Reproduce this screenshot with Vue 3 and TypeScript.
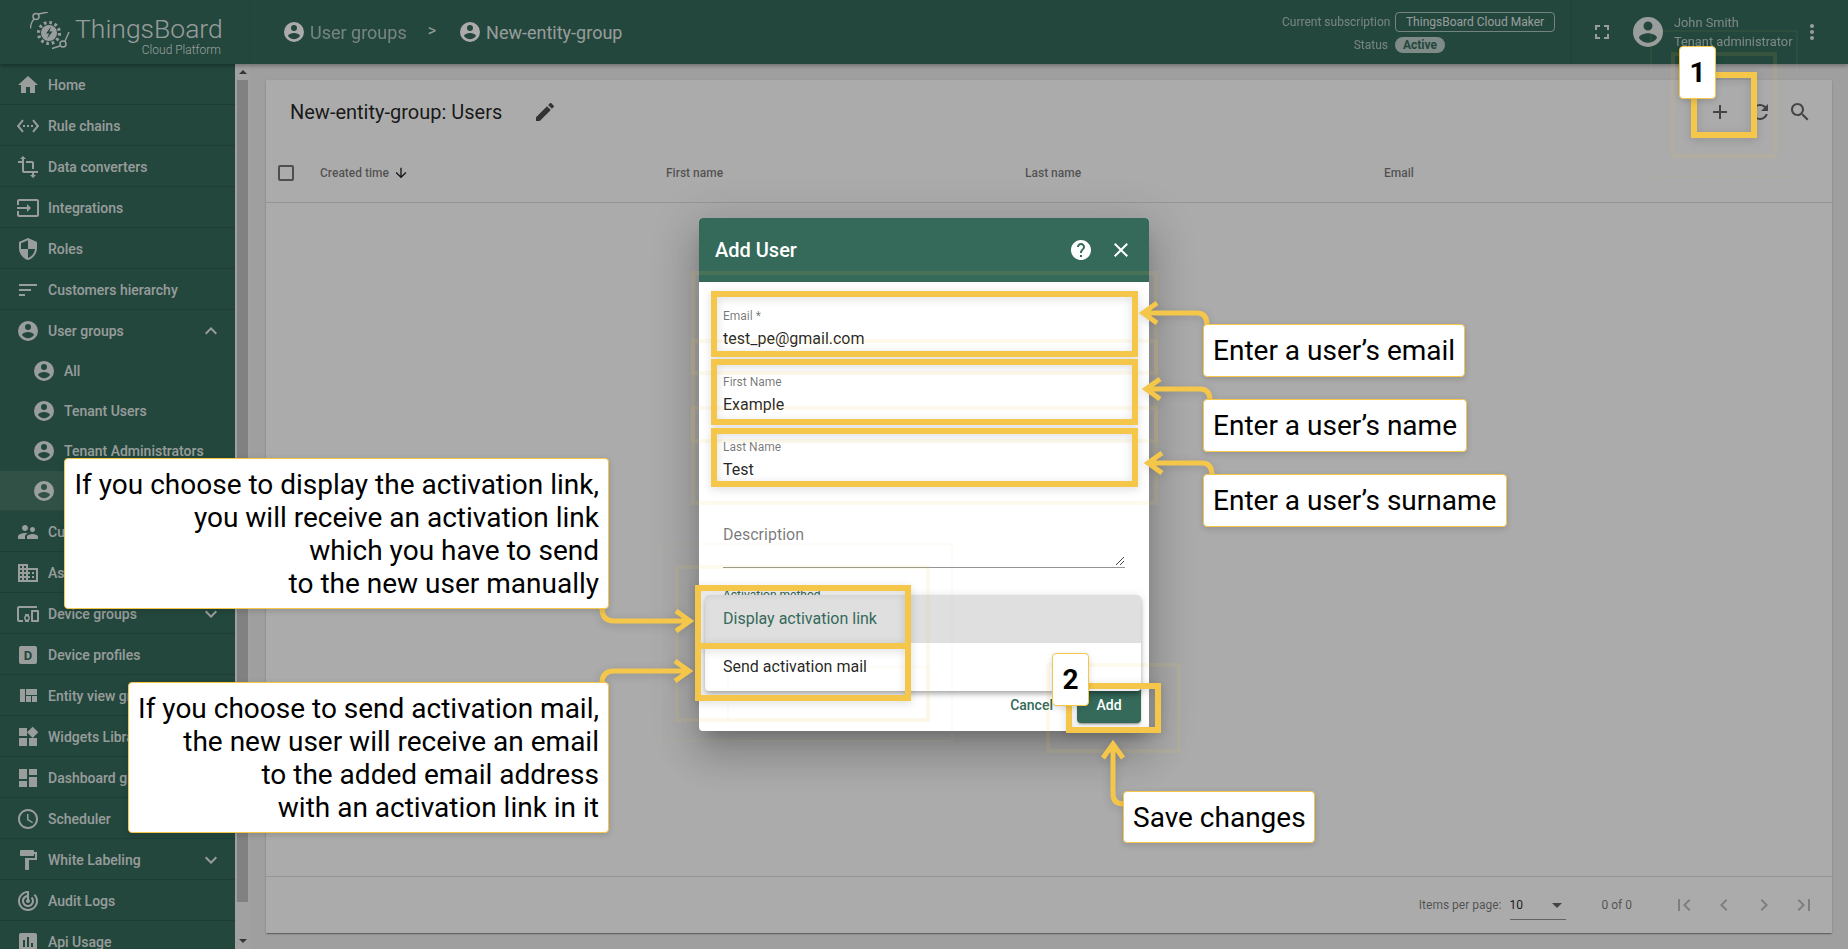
<template>
  <div class="page">
    <header class="topbar">
      <div class="brand">
        <svg class="logo" viewBox="0 0 41 41">
          <circle cx="19" cy="21" r="8" />
          <circle cx="19" cy="21" r="10.5" fill="none" stroke="currentColor" stroke-width="3.2" stroke-dasharray="2.6 2.9" />
          <path d="M21 14.5l-5 7h3l-2 5.500 5.500-7.500h-3z" fill="#356a5b" />
          <path d="M8.500 2L18 0M4 7C1.500 10 .5 13 .5 16.500M35 29l4-9M30 34l-8 2.500" fill="none" stroke="currentColor" stroke-width="1.4" />
          <circle cx="6" cy="4.500" r="3" fill="none" stroke="currentColor" stroke-width="1.5" />
          <circle cx="33" cy="32" r="3" fill="none" stroke="currentColor" stroke-width="1.5" />
        </svg>
        <div class="brand-text">
          <div class="brand-name">ThingsBoard</div>
          <div class="brand-sub">Cloud Platform</div>
        </div>
      </div>
      <div class="crumbs">
        <svg class="crumb-icon" viewBox="0 0 24 24"><path :d="icons.account" fill-rule="evenodd" /></svg>
        <span class="crumb-dim">User groups</span>
        <span class="crumb-sep">&gt;</span>
        <svg class="crumb-icon" viewBox="0 0 24 24"><path :d="icons.account" fill-rule="evenodd" /></svg>
        <span>New-entity-group</span>
      </div>
      <div class="plan">
        <div class="plan-row">
          <span class="plan-key">Current subscription</span>
          <span class="plan-name">ThingsBoard Cloud Maker</span>
        </div>
        <div class="plan-row">
          <span class="plan-key">Status</span>
          <span class="plan-status">Active</span>
        </div>
      </div>
      <div class="account">
        <svg class="full-icon" viewBox="0 0 24 24"><path :d="icons.fullscreen" /></svg>
        <svg class="avatar" viewBox="0 0 24 24"><path :d="icons.account" fill-rule="evenodd" /></svg>
        <div class="who">
          <div>John Smith</div>
          <div>Tenant administrator</div>
        </div>
        <svg class="more-icon" viewBox="0 0 24 24"><path :d="icons.more" /></svg>
      </div>
    </header>

    <div class="main">
      <aside class="sidebar">
        <nav class="menu">
          <div
            v-for="item in menu"
            :key="item.label"
            :class="['menu-item', { sub: item.sub, active: item.active, plain: item.plain }]"
          >
            <svg v-if="item.icon !== 'profile'" class="menu-icon" viewBox="0 0 24 24">
              <path :d="icons[item.icon]" fill-rule="evenodd" />
            </svg>
            <svg v-else class="menu-icon" viewBox="0 0 24 24">
              <rect x="3" y="3" width="18" height="18" rx="2" />
              <text x="12" y="17" text-anchor="middle" class="profile-letter">D</text>
            </svg>
            <span class="menu-label">{{ item.label }}</span>
            <svg v-if="item.chevron" class="menu-chevron" viewBox="0 0 24 24">
              <path :d="icons[item.chevron]" />
            </svg>
          </div>
        </nav>
        <div class="scrollbar">
          <span class="scroll-up"></span>
          <span class="scroll-thumb"></span>
          <span class="scroll-down"></span>
        </div>
      </aside>

      <main class="content">
        <section class="card">
          <div class="card-toolbar">
            <span class="card-title">New-entity-group: Users</span>
            <svg class="edit-icon" viewBox="0 0 24 24"><path :d="icons.edit" /></svg>
            <div class="tools">
              <svg viewBox="0 0 24 24"><path :d="icons.add" /></svg>
              <svg viewBox="0 0 24 24"><path :d="icons.refresh" /></svg>
              <svg viewBox="0 0 24 24"><path :d="icons.search" /></svg>
            </div>
          </div>
          <div class="table-head">
            <span class="check"></span>
            <span class="col sorted">
              Created time
              <svg viewBox="0 0 24 24"><path :d="icons.arrowDown" /></svg>
            </span>
            <span class="col">First name</span>
            <span class="col">Last name</span>
            <span class="col">Email</span>
          </div>
          <div class="table-body"></div>
          <div class="pager">
            <span class="pager-label">Items per page:</span>
            <span class="pager-select">10<i class="caret"></i></span>
            <span class="pager-range">0 of 0</span>
            <svg v-for="p in pagerIcons" :key="p" class="pager-btn" viewBox="0 0 24 24">
              <path :d="icons[p]" />
            </svg>
          </div>
        </section>
      </main>
    </div>

    <div class="backdrop">
      <div class="dialog">
        <div class="dialog-head">
          <span class="dialog-title">Add User</span>
          <svg viewBox="0 0 24 24"><path :d="icons.help" /></svg>
          <svg viewBox="0 0 24 24"><path :d="icons.close" /></svg>
        </div>
        <div class="dialog-body">
          <div v-for="f in fields" :key="f.label" class="field">
            <label>{{ f.label }}</label>
            <div class="value">{{ f.value }}</div>
          </div>
          <div class="textarea">
            <span>Description</span>
            <svg class="grip" viewBox="0 0 10 10">
              <path d="M1 9l8-8M5 9l4-4" stroke="#444" stroke-width="1" fill="none" />
            </svg>
          </div>
          <div class="select-label">Activation method</div>
        </div>
        <div class="dropdown">
          <div class="option selected">Display activation link</div>
          <div class="option">Send activation mail</div>
        </div>
        <div class="dialog-foot">
          <button class="btn-text">Cancel</button>
          <button class="btn-fill">Add</button>
        </div>
      </div>
    </div>

    <div class="annotations">
      <svg class="marks" viewBox="0 0 1848 949">
        <rect
          v-for="(g, i) in ghosts"
          :key="'g' + i"
          :x="g[0]"
          :y="g[1]"
          :width="g[2] - g[0]"
          :height="g[3] - g[1]"
          :stroke-width="g[4]"
          :stroke-opacity="g[5]"
          class="ghost"
        />
        <g class="solid">
          <rect
            v-for="(b, i) in boxes"
            :key="'b' + i"
            :x="b[0] + 3"
            :y="b[1] + 3"
            :width="b[2] - b[0] - 6"
            :height="b[3] - b[1] - 6"
          />
          <path v-for="(a, i) in arrows" :key="'a' + i" :d="a" />
        </g>
      </svg>
      <div v-for="c in callouts" :key="c.text" :class="['callout', c.cls]">
        <div v-for="line in c.text.split('\n')" :key="line">{{ line }}</div>
      </div>
      <div class="badge badge-one">1</div>
      <div class="badge badge-two">2</div>
    </div>
  </div>
</template>

<script setup lang="ts">
const icons: Record<string, string> = {
  home: 'M10 20v-6h4v6h5v-8h3L12 3 2 12h3v8z',
  account: 'M12 19.2c-2.5 0-4.71-1.28-6-3.2.03-2 4-3.1 6-3.1s5.97 1.1 6 3.1c-1.29 1.92-3.5 3.2-6 3.2M12 5a3 3 0 0 1 3 3 3 3 0 0 1-3 3 3 3 0 0 1-3-3 3 3 0 0 1 3-3m0-3A10 10 0 0 0 2 12a10 10 0 0 0 10 10 10 10 0 0 0 10-10A10 10 0 0 0 12 2z',
  ethernet: 'M7.77 6.76L6.23 5.48.82 12l5.41 6.52 1.54-1.28L3.42 12l4.35-5.24zM7 13h2v-2H7v2zm10-2h-2v2h2v-2zm-6 2h2v-2h-2v2zm6.77-7.52l-1.54 1.28L20.58 12l-4.35 5.24 1.54 1.28L23.18 12l-5.41-6.52z',
  transform: 'M22 18v-2H8V4h2L7 1 4 4h2v2H2v2h4v8c0 1.1.9 2 2 2h8v2h-2l3 3 3-3h-2v-2h4zM10 8h6v6h2V8c0-1.1-.9-2-2-2h-6v2z',
  input: 'M21 3.01H3c-1.1 0-2 .9-2 2V9h2V4.99h18v14.03H3V15H1v4.01c0 1.1.9 1.98 2 1.98h18c1.1 0 2-.88 2-1.98v-14c0-1.11-.9-2-2-2zM11 16l4-4-4-4v3H1v2h10v3z',
  security: 'M12 1L3 5v6c0 5.55 3.84 10.74 9 12 5.16-1.26 9-6.45 9-12V5l-9-4zm0 10.99h7c-.53 4.12-3.28 7.79-7 8.94V12H5V6.3l7-3.11v8.8z',
  sort: 'M3 18h6v-2H3v2zM3 6v2h18V6H3zm0 7h12v-2H3v2z',
  people: 'M16.5 12c1.38 0 2.49-1.12 2.49-2.5S17.88 7 16.5 7C15.12 7 14 8.12 14 9.5s1.12 2.5 2.5 2.5zM9 11c1.66 0 2.99-1.34 2.99-3S10.66 5 9 5C7.34 5 6 6.34 6 8s1.34 3 3 3zm7.5 3c-1.83 0-5.5.92-5.5 2.75V19h11v-2.25c0-1.83-3.67-2.75-5.5-2.75zM9 13c-2.33 0-7 1.17-7 3.5V19h7v-2.25c0-.85.33-2.34 2.37-3.47C10.5 13.1 9.66 13 9 13z',
  domain: 'M12 7V3H2v18h20V7H10zM6 19H4v-2h2v2zm0-4H4v-2h2v2zm0-4H4V9h2v2zm0-4H4V5h2v2zm4 12H8v-2h2v2zm0-4H8v-2h2v2zm0-4H8V9h2v2zm0-4H8V5h2v2zm10 12h-8v-2h2v-2h-2v-2h2v-2h-2V9h8v10zm-2-8h-2v2h2v-2zm0 4h-2v2h2v-2z',
  devices: 'M3 6h18V4H3c-1.1 0-2 .9-2 2v12c0 1.1.9 2 2 2h4v-2H3V6zm10 6H9v1.78c-.61.55-1 1.33-1 2.22s.39 1.67 1 2.22V20h4v-1.78c.61-.55 1-1.34 1-2.22s-.39-1.67-1-2.22V12zm-2 5.5c-.83 0-1.5-.67-1.5-1.5s.67-1.5 1.5-1.5 1.5.67 1.5 1.5-.67 1.5-1.5 1.5zM22 8h-6c-.5 0-1 .5-1 1v10c0 .5.5 1 1 1h6c.5 0 1-.5 1-1V9c0-.5-.5-1-1-1zm-1 10h-4v-8h4v8z',
  quilt: 'M10 18h5v-6h-5v6zm-6 0h5V5H4v13zm12 0h5v-6h-5v6zM10 5v6h11V5H10z',
  widgets: 'M13 13v8h8v-8h-8zM3 21h8v-8H3v8zM3 3v8h8V3H3zm13.66-1.31L11 7.34 16.66 13l5.66-5.66-5.66-5.65z',
  dashboard: 'M3 13h8V3H3v10zm0 8h8v-6H3v6zm10 0h8V11h-8v10zm0-18v6h8V3h-8z',
  schedule: 'M11.99 2C6.47 2 2 6.48 2 12s4.47 10 9.99 10C17.52 22 22 17.52 22 12S17.52 2 11.99 2zM12 20c-4.42 0-8-3.58-8-8s3.58-8 8-8 8 3.58 8 8-3.58 8-8 8zm.5-13H11v6l5.25 3.15.75-1.23-4.5-2.67z',
  paint: 'M18 4V3c0-.55-.45-1-1-1H5c-.55 0-1 .45-1 1v4c0 .55.45 1 1 1h12c.55 0 1-.45 1-1V6h1v4H9v11c0 .55.45 1 1 1h2c.55 0 1-.45 1-1v-9h8V4h-3z',
  track: 'M19.07 4.93l-1.41 1.41C19.1 7.79 20 9.79 20 12c0 4.42-3.58 8-8 8s-8-3.58-8-8c0-4.08 3.05-7.44 7-7.93v2.02C8.16 6.57 6 9.03 6 12c0 3.31 2.69 6 6 6s6-2.69 6-6c0-1.66-.67-3.16-1.76-4.24l-1.41 1.41C15.55 9.9 16 10.9 16 12c0 2.21-1.79 4-4 4s-4-1.79-4-4c0-1.86 1.28-3.41 3-3.86v2.14c-.6.35-1 .98-1 1.72 0 1.1.9 2 2 2s2-.9 2-2c0-.74-.4-1.38-1-1.72V2h-1C6.48 2 2 6.48 2 12s4.48 10 10 10 10-4.48 10-10c0-2.76-1.12-5.26-2.93-7.07z',
  chart: 'M19 3H5c-1.1 0-2 .9-2 2v14c0 1.1.9 2 2 2h14c1.1 0 2-.9 2-2V5c0-1.1-.9-2-2-2zM9 17H7v-7h2v7zm4 0h-2V7h2v10zm4 0h-2v-4h2v4z',
  less: 'M12 8l-6 6 1.41 1.41L12 10.83l4.59 4.58L18 14z',
  expand: 'M16.59 8.59L12 13.17 7.41 8.59 6 10l6 6 6-6z',
  edit: 'M3 17.25V21h3.75L17.81 9.94l-3.75-3.75L3 17.25zM20.71 7.04c.39-.39.39-1.02 0-1.41l-2.34-2.34c-.39-.39-1.02-.39-1.41 0l-1.83 1.83 3.75 3.75 1.83-1.83z',
  arrowDown: 'M20 12l-1.41-1.41L13 16.17V4h-2v12.17l-5.58-5.59L4 12l8 8 8-8z',
  add: 'M19 13h-6v6h-2v-6H5v-2h6V5h2v6h6v2z',
  refresh: 'M17.65 6.35C16.2 4.9 14.21 4 12 4c-4.42 0-7.99 3.58-7.99 8s3.57 8 7.99 8c3.73 0 6.84-2.55 7.73-6h-2.08c-.82 2.33-3.04 4-5.65 4-3.31 0-6-2.69-6-6s2.69-6 6-6c1.66 0 3.14.69 4.22 1.78L13 11h7V4l-2.35 2.35z',
  search: 'M15.5 14h-.79l-.28-.27C15.41 12.59 16 11.11 16 9.5 16 5.91 13.09 3 9.5 3S3 5.91 3 9.5 5.91 16 9.5 16c1.61 0 3.09-.59 4.23-1.57l.27.28v.79l5 4.99L20.49 19l-4.99-5zm-6 0C7.01 14 5 11.99 5 9.5S7.01 5 9.5 5 14 7.01 14 9.5 11.99 14 9.5 14z',
  fullscreen: 'M7 14H5v5h5v-2H7v-3zm-2-4h2V7h3V5H5v5zm12 7h-3v2h5v-5h-2v3zM14 5v2h3v3h2V5h-5z',
  more: 'M12 8c1.1 0 2-.9 2-2s-.9-2-2-2-2 .9-2 2 .9 2 2 2zm0 2c-1.1 0-2 .9-2 2s.9 2 2 2 2-.9 2-2-.9-2-2-2zm0 6c-1.1 0-2 .9-2 2s.9 2 2 2 2-.9 2-2-.9-2-2-2z',
  close: 'M19 6.41L17.59 5 12 10.59 6.41 5 5 6.41 10.59 12 5 17.59 6.41 19 12 13.41 17.59 19 19 17.59 13.41 12z',
  help: 'M12 2C6.48 2 2 6.48 2 12s4.48 10 10 10 10-4.48 10-10S17.52 2 12 2zm1 17h-2v-2h2v2zm2.07-7.75l-.9.92C13.45 12.9 13 13.5 13 15h-2v-.5c0-1.1.45-2.1 1.17-2.83l1.24-1.26c.37-.36.59-.86.59-1.41 0-1.1-.9-2-2-2s-2 .9-2 2H8c0-2.21 1.79-4 4-4s4 1.79 4 4c0 .88-.36 1.68-.93 2.25z',
  first: 'M18.41 16.59L13.82 12l4.59-4.59L17 6l-6 6 6 6zM6 6h2v12H6z',
  prev: 'M15.41 7.41L14 6l-6 6 6 6 1.41-1.41L10.83 12z',
  next: 'M10 6L8.59 7.41 13.17 12l-4.58 4.59L10 18l6-6z',
  last: 'M5.59 7.41L10.18 12l-4.59 4.59L7 18l6-6-6-6zM16 6h2v12h-2z'
}

interface MenuItem {
  label: string
  icon: string
  sub?: boolean
  active?: boolean
  plain?: boolean
  chevron?: string
}

const menu: MenuItem[] = [
  { label: 'Home', icon: 'home' },
  { label: 'Rule chains', icon: 'ethernet' },
  { label: 'Data converters', icon: 'transform' },
  { label: 'Integrations', icon: 'input' },
  { label: 'Roles', icon: 'security' },
  { label: 'Customers hierarchy', icon: 'sort' },
  { label: 'User groups', icon: 'account', chevron: 'less', plain: true },
  { label: 'All', icon: 'account', sub: true },
  { label: 'Tenant Users', icon: 'account', sub: true },
  { label: 'Tenant Administrators', icon: 'account', sub: true },
  { label: 'New-entity-group', icon: 'account', sub: true, active: true },
  { label: 'Customer groups', icon: 'people' },
  { label: 'Asset groups', icon: 'domain' },
  { label: 'Device groups', icon: 'devices', chevron: 'expand' },
  { label: 'Device profiles', icon: 'profile' },
  { label: 'Entity view groups', icon: 'quilt' },
  { label: 'Widgets Library', icon: 'widgets' },
  { label: 'Dashboard groups', icon: 'dashboard' },
  { label: 'Scheduler', icon: 'schedule' },
  { label: 'White Labeling', icon: 'paint', chevron: 'expand' },
  { label: 'Audit Logs', icon: 'track' },
  { label: 'Api Usage', icon: 'chart' }
]

const pagerIcons = ['first', 'prev', 'next', 'last']

const fields = [
  { label: 'Email *', value: 'test_pe@gmail.com' },
  { label: 'First Name', value: 'Example' },
  { label: 'Last Name', value: 'Test' }
]

// x1, y1, x2, y2 of the yellow frames
const boxes = [
  [1691, 72, 1757, 138],
  [711, 291, 1138, 357],
  [711, 359, 1138, 425],
  [711, 428, 1138, 487],
  [695, 585, 911, 649],
  [695, 643, 911, 701],
  [1066, 683, 1161, 733]
]

const ghosts = [
  [1673, 54, 1775, 156, 4, 0.1],
  [1651, 31, 1797, 177, 2, 0.05],
  [693, 273, 1156, 373, 4, 0.1],
  [693, 341, 1156, 441, 4, 0.1],
  [693, 408, 1156, 503, 4, 0.1],
  [677, 567, 928, 720, 4, 0.1],
  [728, 667, 928, 720, 2, 0.05],
  [660, 544, 952, 741, 2, 0.05],
  [1048, 665, 1179, 751, 4, 0.1]
]

const arrows = [
  'M1143 313H1197Q1207 313 1207 325M1157 303L1143 313L1157 323',
  'M1146 389H1200Q1210 389 1210 400M1160 379L1146 389L1160 399',
  'M1148 463H1202Q1212 463 1212 475M1162 453L1148 463L1162 473',
  'M602 608Q602 621 614 621H690M676 611L690 621L676 631',
  'M602 683Q602 671 614 671H689M675 661L689 671L675 681',
  'M1113 744V794Q1113 804 1124 804M1103 758L1113 744L1123 758'
]

const callouts = [
  { cls: 'c-email', text: 'Enter a user’s email' },
  { cls: 'c-name', text: 'Enter a user’s name' },
  { cls: 'c-surname', text: 'Enter a user’s surname' },
  { cls: 'c-save', text: 'Save changes' },
  {
    cls: 'c-link right',
    text: 'If you choose to display the activation link,\nyou will receive an activation link\nwhich you have to send\nto the new user manually'
  },
  {
    cls: 'c-mail right',
    text: 'If you choose to send activation mail,\nthe new user will receive an email\nto the added email address\nwith an activation link in it'
  }
]
</script>

<style>
html,
body {
  margin: 0;
  overflow: hidden;
}
</style>

<style scoped>
.page {
  position: relative;
  display: flex;
  flex-direction: column;
  width: 1848px;
  height: 949px;
  overflow: hidden;
  background: #eee;
  font-family: Roboto, "Liberation Sans", sans-serif;
  color: rgba(0, 0, 0, 0.87);
}

svg {
  display: block;
  fill: currentColor;
}

.topbar {
  display: flex;
  align-items: center;
  flex-shrink: 0;
  height: 64px;
  background: #356a5b;
  color: rgba(255, 255, 255, 0.87);
  box-shadow: 0 2px 4px rgba(0, 0, 0, 0.3);
  position: relative;
  z-index: 1;
}

.brand {
  display: flex;
  width: 250px;
  height: 64px;
  padding: 12px 0 0 30px;
  box-sizing: border-box;
  border-right: 1px solid rgba(0, 0, 0, 0.06);
}

.logo {
  width: 41px;
  height: 41px;
  flex-shrink: 0;
}

.brand-text {
  margin-left: 4px;
  width: 146px;
  text-align: right;
  font-weight: 300;
}

.brand-name {
  font-size: 26.5px;
  line-height: 32px;
  margin-top: 1px;
  white-space: nowrap;
}

.brand-sub {
  font-size: 12px;
  line-height: 14px;
  margin-top: -2px;
}

.crumbs {
  display: flex;
  align-items: center;
  margin-left: 32px;
  font-size: 18px;
  flex: 1;
}

.crumb-icon {
  width: 24px;
  height: 24px;
  margin-right: 4px;
  color: #fff;
}

.crumb-dim {
  opacity: 0.7;
}

.crumb-sep {
  margin: -4px 22px 0 21px;
  font-size: 16px;
}

.plan {
  display: flex;
  flex-direction: column;
  gap: 5px;
  font-size: 12px;
  margin-right: 16px;
}

.plan-row {
  display: flex;
  align-items: center;
  gap: 7px;
}

.plan-key {
  width: 106px;
  text-align: right;
  opacity: 0.7;
  white-space: nowrap;
}

.plan-name {
  width: 160px;
  height: 20px;
  box-sizing: border-box;
  line-height: 18px;
  text-align: center;
  border: 1px solid rgba(255, 255, 255, 0.6);
  border-radius: 4px;
}

.plan-status {
  width: 50px;
  height: 16px;
  line-height: 16px;
  text-align: center;
  border-radius: 8px;
  background: rgba(255, 255, 255, 0.68);
  color: #356a5b;
  font-weight: 700;
}

.account {
  display: flex;
  align-items: center;
  width: 277px;
  height: 64px;
  box-sizing: border-box;
  border-left: 1px solid rgba(0, 0, 0, 0.08);
  padding-left: 18px;
}

.full-icon {
  width: 24px;
  height: 24px;
}

.avatar {
  width: 36px;
  height: 36px;
  margin-left: 16px;
}

.who {
  margin-left: 8px;
  font-size: 12.8px;
  line-height: 19px;
  opacity: 0.75;
  white-space: nowrap;
  width: 126px;
}

.more-icon {
  width: 24px;
  height: 24px;
}

.main {
  display: flex;
  flex: 1;
  min-height: 0;
}

.sidebar {
  display: flex;
  width: 250px;
  flex-shrink: 0;
  background: #356a5b;
  overflow: hidden;
}

.menu {
  width: 235px;
  flex-shrink: 0;
}

.menu-item {
  display: flex;
  align-items: center;
  height: 41px;
  box-sizing: border-box;
  padding-left: 16px;
  padding-top: 1px;
  border-bottom: 1px solid rgba(0, 0, 0, 0.12);
  color: rgba(255, 255, 255, 0.87);
  font-size: 14px;
  font-weight: 500;
}

.menu-item.plain {
  border-bottom: 0;
  padding-top: 0;
}

.menu-item.sub {
  height: 40px;
  padding-left: 32px;
  padding-top: 0;
  border-bottom: 0;
}

.menu-item.active {
  background: rgba(255, 255, 255, 0.1);
  border-bottom: 1px solid rgba(0, 0, 0, 0.12);
}

.menu-icon {
  width: 24px;
  height: 24px;
  flex-shrink: 0;
  margin-right: 8px;
}

.profile-letter {
  font-size: 13px;
  font-weight: 700;
  font-family: Roboto, sans-serif;
  fill: #356a5b;
}

.menu-label {
  flex: 1;
  white-space: nowrap;
}

.menu-chevron {
  width: 24px;
  height: 24px;
  margin-right: 12px;
}

.scrollbar {
  position: relative;
  flex: 1;
  background: #f1f1f1;
}

.scroll-thumb {
  position: absolute;
  left: 2px;
  right: 2px;
  top: 16px;
  bottom: 47px;
  background: #c1c1c1;
}

.scroll-up,
.scroll-down {
  position: absolute;
  left: 4px;
  border-left: 4px solid transparent;
  border-right: 4px solid transparent;
}

.scroll-up {
  top: 6px;
  border-bottom: 4px solid #505050;
}

.scroll-down {
  bottom: 6px;
  border-top: 4px solid #505050;
}

.content {
  flex: 1;
  min-width: 0;
  padding: 16px;
  display: flex;
}

.card {
  flex: 1;
  display: flex;
  flex-direction: column;
  background: #fff;
  box-shadow: 0 2px 1px -1px rgba(0, 0, 0, 0.2), 0 1px 1px rgba(0, 0, 0, 0.14), 0 1px 3px rgba(0, 0, 0, 0.12);
}

.card-toolbar {
  display: flex;
  align-items: center;
  height: 64px;
  padding: 0 20px 0 24px;
  flex-shrink: 0;
}

.card-title {
  font-size: 20px;
  font-weight: 400;
}

.edit-icon {
  width: 24px;
  height: 24px;
  margin-left: 31px;
  color: rgba(0, 0, 0, 0.7);
}

.tools {
  display: flex;
  gap: 16px;
  margin-left: auto;
  color: rgba(0, 0, 0, 0.6);
}

.tools svg {
  width: 24px;
  height: 24px;
}

.table-head {
  display: grid;
  grid-template-columns: 42px 346px 359px 359px 1fr;
  align-items: center;
  height: 59px;
  box-sizing: border-box;
  padding: 0 0 1px 12px;
  border-bottom: 1px solid rgba(0, 0, 0, 0.12);
  font-size: 12px;
  font-weight: 500;
  color: rgba(0, 0, 0, 0.54);
}

.check {
  width: 12px;
  height: 12px;
  border: 2px solid rgba(0, 0, 0, 0.54);
  border-radius: 2px;
}

.sorted {
  display: flex;
  align-items: center;
  gap: 4px;
}

.sorted svg {
  width: 16px;
  height: 16px;
  color: rgba(0, 0, 0, 0.87);
}

.table-body {
  flex: 1;
}

.pager {
  display: flex;
  align-items: center;
  height: 56px;
  padding-right: 8px;
  justify-content: flex-end;
  border-top: 1px solid rgba(0, 0, 0, 0.12);
  font-size: 12px;
  color: rgba(0, 0, 0, 0.54);
}

.pager-select {
  position: relative;
  width: 56px;
  margin: 6px 0 0 8px;
  padding-bottom: 5px;
  border-bottom: 1px solid rgba(0, 0, 0, 0.42);
  color: rgba(0, 0, 0, 0.87);
  line-height: 18px;
}

.caret {
  position: absolute;
  right: 4px;
  top: 7px;
  border-left: 5px solid transparent;
  border-right: 5px solid transparent;
  border-top: 5px solid rgba(0, 0, 0, 0.6);
}

.pager-range {
  margin: 0 32px 0 36px;
}

.pager-btn {
  width: 24px;
  height: 24px;
  padding: 0 8px;
  color: rgba(0, 0, 0, 0.26);
}

.backdrop {
  position: absolute;
  inset: 0;
  display: flex;
  align-items: center;
  justify-content: center;
  background: rgba(0, 0, 0, 0.33);
  z-index: 2;
}

.dialog {
  position: relative;
  display: flex;
  flex-direction: column;
  width: 450px;
  height: 513px;
  background: #fff;
  border-radius: 4px;
  box-shadow: 0 11px 15px -7px rgba(0, 0, 0, 0.2), 0 24px 38px 3px rgba(0, 0, 0, 0.14), 0 9px 46px 8px rgba(0, 0, 0, 0.12);
}

.dialog-head {
  display: flex;
  align-items: center;
  height: 64px;
  flex-shrink: 0;
  padding: 0 16px;
  background: #356a5b;
  border-radius: 4px 4px 0 0;
  color: #fff;
  font-size: 20px;
  font-weight: 500;
}

.dialog-head svg {
  width: 24px;
  height: 24px;
  margin-left: 16px;
}

.dialog-title {
  flex: 1;
}

.dialog-body {
  padding: 25px 24px 0;
  display: flex;
  flex-direction: column;
}

.field {
  margin-bottom: 21.5px;
}

.field label {
  display: block;
  font-size: 12px;
  line-height: 18px;
  color: rgba(0, 0, 0, 0.54);
}

.value {
  margin-top: 2px;
  font-size: 16px;
  line-height: 24px;
}

.textarea {
  position: relative;
  height: 44px;
  margin-top: 19px;
  border-bottom: 1px solid rgba(0, 0, 0, 0.42);
  font-size: 16px;
  line-height: 24px;
  color: rgba(0, 0, 0, 0.54);
}

.grip {
  position: absolute;
  right: 0;
  bottom: 1px;
  width: 10px;
  height: 10px;
}

.select-label {
  margin-top: 18px;
  font-size: 12px;
  line-height: 18px;
  color: #356a5b;
}

.dropdown {
  position: absolute;
  left: 6px;
  right: 8px;
  top: 377px;
  background: #fff;
  border-radius: 4px;
  overflow: hidden;
  box-shadow: 0 2px 4px -1px rgba(0, 0, 0, 0.2), 0 4px 5px rgba(0, 0, 0, 0.14), 0 1px 10px rgba(0, 0, 0, 0.12);
  z-index: 1;
}

.option {
  height: 48px;
  line-height: 48px;
  padding-left: 18px;
  font-size: 16px;
}

.option.selected {
  background: #dfdfdf;
  color: #356a5b;
}

.dialog-foot {
  display: flex;
  justify-content: flex-end;
  gap: 8px;
  margin-top: auto;
  padding: 0 8px 8px;
}

.dialog-foot button {
  height: 36px;
  border: 0;
  border-radius: 4px;
  padding: 0 16px;
  font: 500 14px Roboto, sans-serif;
}

.btn-text {
  background: transparent;
  color: #356a5b;
}

.btn-fill {
  width: 64px;
  background: #356a5b;
  color: #fff;
  box-shadow: 0 3px 1px -2px rgba(0, 0, 0, 0.2), 0 2px 2px rgba(0, 0, 0, 0.14), 0 1px 5px rgba(0, 0, 0, 0.12);
}

.annotations {
  position: absolute;
  inset: 0;
  z-index: 3;
}

.marks {
  position: absolute;
  inset: 0;
  width: 1848px;
  height: 949px;
  fill: none;
}

.ghost {
  stroke: #f4c64a;
}

.solid {
  stroke: #f4c64a;
  stroke-width: 6;
  filter: drop-shadow(0 2px 4px rgba(0, 0, 0, 0.15));
}

.solid path {
  stroke-width: 5;
}

.callout {
  position: absolute;
  box-sizing: border-box;
  padding: 0 9px;
  background: #fff;
  border: 1px solid #f4c64a;
  border-radius: 4px;
  box-shadow: 0 2px 6px rgba(0, 0, 0, 0.15);
  color: #000;
  font-size: 28px;
  line-height: 33px;
  white-space: nowrap;
  display: flex;
  flex-direction: column;
  justify-content: center;
}

.right {
  text-align: right;
}

.c-email {
  left: 1203px;
  top: 324px;
  width: 262px;
  height: 53px;
}

.c-name {
  left: 1203px;
  top: 399px;
  width: 264px;
  height: 53px;
}

.c-surname {
  left: 1203px;
  top: 474px;
  width: 304px;
  height: 53px;
}

.c-save {
  left: 1123px;
  top: 791px;
  width: 192px;
  height: 52px;
}

.c-link {
  left: 64px;
  top: 458px;
  width: 545px;
  height: 151px;
}

.c-mail {
  left: 128px;
  top: 682px;
  width: 481px;
  height: 151px;
}

.badge {
  position: absolute;
  width: 37px;
  height: 53px;
  box-sizing: border-box;
  background: #fff;
  border: 1px solid #f4c64a;
  border-radius: 4px;
  box-shadow: 0 2px 6px rgba(0, 0, 0, 0.15);
  color: #000;
  font-size: 28px;
  font-weight: 700;
  line-height: 51px;
  text-align: center;
}

.badge-one {
  left: 1679px;
  top: 46px;
}

.badge-two {
  left: 1052px;
  top: 653px;
}
</style>
